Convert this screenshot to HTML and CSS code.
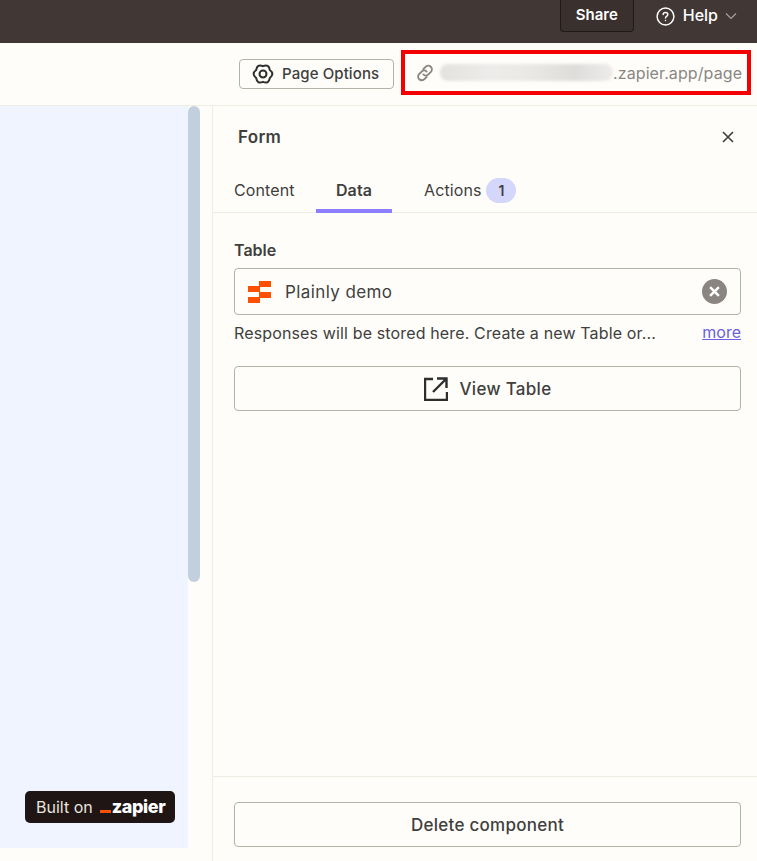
FILE: index.html
```html
<!DOCTYPE html>
<html lang="en">
<head>
    <meta charset="UTF-8">
    <meta name="viewport" content="width=device-width, initial-scale=1.0">
    <title>Page editor - Form</title>
    <link rel="stylesheet" href="styles.css">
</head>
<body>

<div class="top-bar">
    <button class="share-btn">Share</button>
    <div class="help">
        <svg width="21" height="21" viewBox="0 0 20 20" fill="none" stroke="currentColor" stroke-width="1.4" stroke-linecap="round">
            <circle cx="10" cy="10" r="8"/>
            <path d="M7.800 8.100c0-1.200 1-2 2.200-2s2.200.8 2.200 2c0 1.700-2.200 1.700-2.200 3.300"/>
            <path d="M10 13.800v.1"/>
        </svg>
        <span>Help</span>
        <svg width="12" height="12" viewBox="0 0 12 12" fill="none" stroke="#a8a29e" stroke-width="1.200">
            <path d="M1 3.500l5 5 5-5"/>
        </svg>
    </div>
</div>

<div class="sub-bar">
    <button class="options-btn">
        <svg width="22" height="22" viewBox="0 0 24 24" fill="none" stroke="#2d2e2e" stroke-width="2.200" stroke-linejoin="round">
            <path d="M12 3.400Q18.500.74 19.450 7.700 25 12 19.450 16.300 18.500 23.260 12 20.600 5.500 23.260 4.550 16.300-1 12 4.550 7.700 5.500.74 12 3.400z"/>
            <circle cx="12" cy="12" r="3.800"/>
        </svg>
        <span>Page Options</span>
    </button>
    <div class="url-box">
        <svg width="20" height="20" viewBox="0 0 18 18" fill="none" stroke="#8a8580" stroke-width="1.700" stroke-linecap="round">
            <path d="M7.500 5.500l2-2a3.200 3.200 0 0 1 4.800 4.500l-2.300 2.300a3.200 3.200 0 0 1-4.500 0"/>
            <path d="M10.500 12.500l-2 2a3.200 3.200 0 0 1-4.800-4.500L6 7.700a3.200 3.200 0 0 1 4.500 0"/>
        </svg>
        <div class="url-blur"></div>
        <span>.zapier.app/page</span>
    </div>
</div>

<div class="workspace">
    <div class="canvas-col">
        <div class="canvas">
            <div class="built-on">
                Built on
                <span class="zapier-logo"><i class="zapier-dash"></i>zapier</span>
            </div>
        </div>
        <div class="scroll-track">
            <div class="scroll-thumb"></div>
        </div>
    </div>

    <div class="panel">
        <div class="panel-head">
            <div class="panel-title">Form</div>
            <svg width="12" height="12" viewBox="0 0 12 12" fill="none" stroke="#3d3d3c" stroke-width="1.600">
                <path d="M1 1l10 10M11 1L1 11"/>
            </svg>
        </div>

        <div class="tabs">
            <div class="tab tab-content">Content</div>
            <div class="tab tab-data">Data</div>
            <div class="tab tab-actions">Actions <span class="count">1</span></div>
        </div>

        <div class="panel-body">
            <div class="field-label">Table</div>
            <div class="select-box">
                <svg width="24" height="22" viewBox="0 0 24 22" fill="#ff4f00">
                    <rect x="11" y="0" width="12" height="6"/>
                    <rect x="0" y="5" width="12" height="6"/>
                    <rect x="11" y="11" width="12" height="6"/>
                    <rect x="0" y="16" width="12" height="6"/>
                </svg>
                <span class="select-text">Plainly demo</span>
                <span class="clear-btn">
                    <svg width="11" height="11" viewBox="0 0 10 10" fill="none" stroke="white" stroke-width="2.200">
                        <path d="M1 1l8 8M9 1L1 9"/>
                    </svg>
                </span>
            </div>
            <div class="help-row">
                <span class="help-text">Responses will be stored here. Create a new Table or...</span>
                <a href="#" class="more">more</a>
            </div>
            <button class="wide-btn view-btn">
                <svg width="24" height="24" viewBox="0 0 24 24" fill="none" stroke="#2d2e2e" stroke-width="2.400">
                    <path d="M9 2H1v21h22v-8"/>
                    <path d="M9 15L22 2M13 1.500h9.500V11"/>
                </svg>
                View Table
            </button>
        </div>

        <div class="panel-foot">
            <button class="wide-btn delete-btn">Delete component</button>
        </div>
    </div>
</div>

</body>
</html>
```

FILE: styles.css
```css
body {
    font-family: Inter, "Noto Sans", sans-serif;
    background-color: #fffdf9;
    color: #403f3e;
    margin: 0;
    height: 861px;
    overflow: hidden;
    display: flex;
    flex-direction: column;
}

button {
    font-family: inherit;
    cursor: pointer;
}

.top-bar {
    height: 43px;
    background-color: #413735;
    color: white;
    display: flex;
    justify-content: flex-end;
    align-items: flex-start;
    padding-right: 20px;
    box-sizing: border-box;
}

.share-btn {
    width: 74px;
    height: 32px;
    background-color: #3a302e;
    border: 1px solid #1f1917;
    border-top: none;
    border-radius: 0 0 4px 4px;
    color: white;
    font-size: 15px;
    font-weight: 600;
    margin-right: 21px;
    padding: 0 0 2px 0;
}

.help {
    display: flex;
    align-items: center;
    height: 32px;
    font-size: 16px;
    font-weight: 500;
}

.help span {
    margin: 0 7px 2px 7px;
}

.sub-bar {
    height: 63px;
    box-sizing: border-box;
    border-bottom: 1px solid #eeede4;
    display: flex;
    justify-content: flex-end;
    align-items: flex-start;
    padding: 7px 6px 0 0;
}

.options-btn {
    width: 155px;
    height: 30px;
    margin-top: 9px;
    margin-right: 7px;
    background: transparent;
    border: 1px solid #b5b2aa;
    border-radius: 4px;
    color: #403f3e;
    font-size: 15px;
    font-weight: 500;
    letter-spacing: 0.1px;
    display: flex;
    align-items: center;
    padding: 0 0 0 12px;
    gap: 8px;
}

.options-btn span {
    margin-bottom: 2px;
}

.url-box {
    width: 350px;
    height: 45px;
    box-sizing: border-box;
    border: 4px solid #f40000;
    display: flex;
    align-items: center;
    padding-left: 10px;
    color: #8a8783;
    font-size: 16px;
    letter-spacing: 0.1px;
    white-space: nowrap;
}

.url-blur {
    width: 173px;
    height: 17px;
    margin-left: 5px;
    border-radius: 8px;
    background: linear-gradient(90deg, #e4e2df, #eeecea 30%, #ebe9e6 50%, #dfdddb 78%, #eeecea);
    filter: blur(1.5px);
}

.workspace {
    flex: 1;
    display: flex;
    min-height: 0;
}

.canvas-col {
    width: 212px;
    flex-shrink: 0;
    display: flex;
    align-items: flex-start;
    border-right: 1px solid #eeede4;
    box-sizing: content-box;
    height: 755px;
}

.canvas {
    width: 188px;
    height: 742px;
    background-color: #f0f4ff;
    position: relative;
}

.built-on {
    position: absolute;
    left: 25px;
    bottom: 25px;
    width: 150px;
    height: 32px;
    box-sizing: border-box;
    padding-left: 11px;
    background-color: #201515;
    border-radius: 5px;
    color: #e8e4de;
    font-size: 16px;
    display: flex;
    align-items: center;
    gap: 7px;
}

.zapier-logo {
    color: white;
    font-size: 18px;
    font-weight: 800;
    letter-spacing: -0.4px;
    display: flex;
    align-items: center;
    margin-top: -1px;
}

.zapier-dash {
    width: 11px;
    height: 3px;
    background-color: #ff4f00;
    margin: 10px 1px 0 0;
}

.scroll-track {
    width: 12px;
}

.scroll-thumb {
    height: 476px;
    background-color: #c1d0dc;
    border-radius: 6px;
}

.panel {
    flex: 1;
    display: flex;
    flex-direction: column;
    min-width: 0;
    height: 755px;
}

.panel-head {
    display: flex;
    justify-content: space-between;
    align-items: center;
    padding: 21px 23px 0 25px;
    height: 20px;
}

.panel-title {
    font-size: 17px;
    font-weight: 600;
    letter-spacing: 0.3px;
}

.tabs {
    display: flex;
    height: 43px;
    margin-top: 22px;
    border-bottom: 1px solid #eeede4;
    font-size: 16px;
    letter-spacing: 0.1px;
    box-sizing: content-box;
}

.tab {
    box-sizing: border-box;
    height: 44px;
    display: flex;
    align-items: center;
    padding-bottom: 2px;
}

.tab-content {
    width: 103px;
    padding-left: 21px;
}

.tab-data {
    width: 76px;
    justify-content: center;
    font-weight: 600;
    border-bottom: 4px solid #8b7fff;
    padding: 2px 0 0 0;
}

.tab-actions {
    margin-left: 32px;
    gap: 5px;
}

.count {
    width: 30px;
    height: 25px;
    border-radius: 13px;
    background-color: #d5d6fb;
    display: flex;
    align-items: center;
    justify-content: center;
    font-size: 14px;
    font-weight: 600;
}

.panel-body {
    flex: 1;
    padding: 28px 16px 0 21px;
}

.field-label {
    font-size: 16px;
    font-weight: 600;
    line-height: 19px;
}

.select-box {
    height: 47px;
    box-sizing: border-box;
    margin-top: 8px;
    border: 1px solid #b5b2aa;
    border-radius: 4px;
    display: flex;
    align-items: center;
    padding: 0 13px 0 13px;
    font-size: 17px;
    letter-spacing: 0.4px;
}

.select-text {
    flex: 1;
    margin-left: 13px;
}

.clear-btn {
    width: 25px;
    height: 25px;
    border-radius: 50%;
    background-color: #8a8580;
    display: flex;
    align-items: center;
    justify-content: center;
}

.help-row {
    display: flex;
    justify-content: space-between;
    font-size: 16px;
    margin-top: 8px;
    line-height: 20px;
}

.help-text {
    letter-spacing: 0.14px;
}

.more {
    color: #6a5fe0;
    margin-top: -1px;
}

.wide-btn {
    display: flex;
    align-items: center;
    justify-content: center;
    width: 100%;
    background: transparent;
    border: 1px solid #b5b2aa;
    border-radius: 4px;
    color: #403f3e;
    font-size: 17px;
    font-weight: 500;
}

.view-btn {
    height: 45px;
    margin-top: 23px;
    gap: 12px;
    letter-spacing: 0.3px;
}

.panel-foot {
    border-top: 1px solid #eeede4;
    padding: 25px 16px 14px 21px;
    height: 85px;
    box-sizing: border-box;
}

.delete-btn {
    height: 45px;
    letter-spacing: 0.25px;
}
```
